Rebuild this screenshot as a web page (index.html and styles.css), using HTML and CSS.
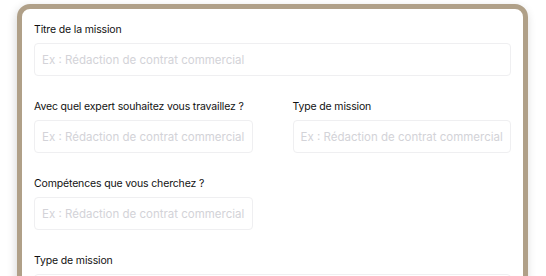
FILE: index.html
```html
<!DOCTYPE html>
<html lang="fr">
<head>
    <meta charset="UTF-8">
    <title>Nouvelle mission</title>
    <link rel="stylesheet" href="styles.css">
</head>
<body>
    <div class="frame">
        <form class="mission_form">
            <label class="field">
                <span>Titre de la mission</span>
                <input type="text" placeholder="Ex : Rédaction de contrat commercial">
            </label>
            <div class="row">
                <label class="field">
                    <span>Avec quel expert souhaitez vous travaillez ?</span>
                    <input type="text" placeholder="Ex : Rédaction de contrat commercial">
                </label>
                <label class="field">
                    <span>Type de mission</span>
                    <input type="text" placeholder="Ex : Rédaction de contrat commercial">
                </label>
            </div>
            <div class="row">
                <label class="field">
                    <span>Compétences que vous cherchez ?</span>
                    <input type="text" placeholder="Ex : Rédaction de contrat commercial">
                </label>
            </div>
            <label class="field">
                <span>Type de mission</span>
                <input type="text" placeholder="Ex : Rédaction de contrat commercial">
            </label>
        </form>
    </div>
</body>
</html>
```
FILE: styles.css
```css
*{
    margin:0;
    padding:0;
    box-sizing:border-box;
}
html,body{
    height:100%;
    overflow:hidden;
    background-color:#fff;
}
body{
    padding:4px 18px 0 17px;
    font-family:Inter,"Noto Sans",sans-serif;
}
.frame{
    height:400px;
    border:5px solid #b0a088;
    border-radius:13px;
    background-color:#fff;
    box-shadow:-1px 3px 10px rgba(0,0,0,0.16);
}
.mission_form{
    display:flex;
    flex-direction:column;
    gap:24px;
    padding:14px 12px 0 12px;
}
.row{
    display:grid;
    grid-template-columns:1fr 1fr;
    column-gap:40px;
}
.field{
    display:flex;
    flex-direction:column;
    gap:6px;
}
.field span{
    display:block;
    height:14px;
    line-height:14px;
    font-size:10.5px;
    font-weight:400;
    letter-spacing:-0.15px;
    color:#111;
    white-space:nowrap;
}
.field input{
    display:block;
    width:100%;
    height:33px;
    padding:0 7px;
    border:1px solid #efeff1;
    border-radius:4px;
    font-family:inherit;
    font-size:11.5px;
    color:#141414;
    background-color:#fff;
    outline:none;
}
.field input::placeholder{
    color:#d3d3d8;
}
```
